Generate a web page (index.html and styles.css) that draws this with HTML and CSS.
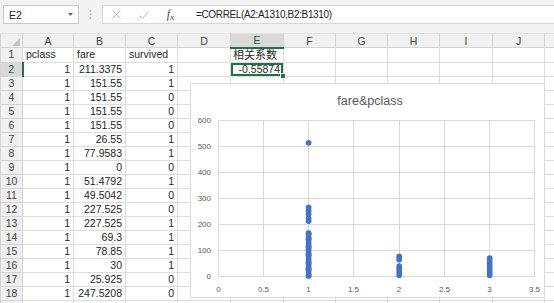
FILE: index.html
```html
<!DOCTYPE html>
<html lang="zh">
<head>
    <meta charset="UTF-8">
    <title>Book1 - Excel</title>
    <link rel="stylesheet" href="styles.css">
</head>
<body>

<div class="topbar">
    <div class="namebox">
        <span>E2</span>
        <svg width="5" height="3" viewBox="0 0 5 3"><path d="M0 0H5L2.5 3Z" fill="#666"/></svg>
    </div>
    <div class="grip">
        <svg width="3" height="9" viewBox="0 0 3 9"><circle cx="1.5" cy="1" r="0.9" fill="#b5b5b5"/><circle cx="1.5" cy="4.5" r="0.9" fill="#b5b5b5"/><circle cx="1.5" cy="8" r="0.9" fill="#b5b5b5"/></svg>
    </div>
    <div class="bar">
        <div class="tools">
            <span class="slot"><svg width="9" height="9" viewBox="0 0 9 9"><path d="M0.5 0.5L8.5 8.5M8.5 0.5L0.5 8.5" stroke="#b9b9b9" stroke-width="1"/></svg></span>
            <span class="slot"><svg width="10" height="8" viewBox="0 0 10 8"><path d="M0.5 4.5L3.5 7.5L9.5 0.5" fill="none" stroke="#b9b9b9" stroke-width="1"/></svg></span>
            <span class="slot fx"><i>f</i><i class="sub">x</i></span>
        </div>
        <div class="formula">=CORREL(A2:A1310,B2:B1310)</div>
    </div>
</div>

<div class="sheet">
    <table class="grid">
        <colgroup>
            <col class="c-rh"><col class="c-a"><col class="c-b"><col class="c-c"><col class="c-d"><col class="c-e"><col class="c-f"><col class="c-g"><col class="c-h"><col class="c-i"><col class="c-j"><col class="c-k">
        </colgroup>
        <tr class="head">
            <th class="corner"><svg width="8" height="8" viewBox="0 0 8 8"><path d="M8 0V8H0Z" fill="#c6c6c6"/></svg></th>
            <th>A</th><th>B</th><th>C</th><th>D</th><th class="colsel">E</th><th>F</th><th>G</th><th>H</th><th>I</th><th>J</th><th></th>
        </tr>
        <tr><td class="rh">1</td><td>pclass</td><td>fare</td><td>survived</td><td></td><td class="cjk">相关系数</td><td></td><td></td><td></td><td></td><td></td><td></td></tr>
        <tr><td class="rh rowsel">2</td><td class="num">1</td><td class="num">211.3375</td><td class="num">1</td><td></td><td class="num sel">-0.55874</td><td></td><td></td><td></td><td></td><td></td><td></td></tr>
        <tr><td class="rh">3</td><td class="num">1</td><td class="num">151.55</td><td class="num">1</td><td></td><td></td><td></td><td></td><td></td><td></td><td></td><td></td></tr>
        <tr><td class="rh">4</td><td class="num">1</td><td class="num">151.55</td><td class="num">0</td><td></td><td></td><td></td><td></td><td></td><td></td><td></td><td></td></tr>
        <tr><td class="rh">5</td><td class="num">1</td><td class="num">151.55</td><td class="num">0</td><td></td><td></td><td></td><td></td><td></td><td></td><td></td><td></td></tr>
        <tr><td class="rh">6</td><td class="num">1</td><td class="num">151.55</td><td class="num">0</td><td></td><td></td><td></td><td></td><td></td><td></td><td></td><td></td></tr>
        <tr><td class="rh">7</td><td class="num">1</td><td class="num">26.55</td><td class="num">1</td><td></td><td></td><td></td><td></td><td></td><td></td><td></td><td></td></tr>
        <tr><td class="rh">8</td><td class="num">1</td><td class="num">77.9583</td><td class="num">1</td><td></td><td></td><td></td><td></td><td></td><td></td><td></td><td></td></tr>
        <tr><td class="rh">9</td><td class="num">1</td><td class="num">0</td><td class="num">0</td><td></td><td></td><td></td><td></td><td></td><td></td><td></td><td></td></tr>
        <tr><td class="rh">10</td><td class="num">1</td><td class="num">51.4792</td><td class="num">1</td><td></td><td></td><td></td><td></td><td></td><td></td><td></td><td></td></tr>
        <tr><td class="rh">11</td><td class="num">1</td><td class="num">49.5042</td><td class="num">0</td><td></td><td></td><td></td><td></td><td></td><td></td><td></td><td></td></tr>
        <tr><td class="rh">12</td><td class="num">1</td><td class="num">227.525</td><td class="num">0</td><td></td><td></td><td></td><td></td><td></td><td></td><td></td><td></td></tr>
        <tr><td class="rh">13</td><td class="num">1</td><td class="num">227.525</td><td class="num">1</td><td></td><td></td><td></td><td></td><td></td><td></td><td></td><td></td></tr>
        <tr><td class="rh">14</td><td class="num">1</td><td class="num">69.3</td><td class="num">1</td><td></td><td></td><td></td><td></td><td></td><td></td><td></td><td></td></tr>
        <tr><td class="rh">15</td><td class="num">1</td><td class="num">78.85</td><td class="num">1</td><td></td><td></td><td></td><td></td><td></td><td></td><td></td><td></td></tr>
        <tr><td class="rh">16</td><td class="num">1</td><td class="num">30</td><td class="num">1</td><td></td><td></td><td></td><td></td><td></td><td></td><td></td><td></td></tr>
        <tr><td class="rh">17</td><td class="num">1</td><td class="num">25.925</td><td class="num">0</td><td></td><td></td><td></td><td></td><td></td><td></td><td></td><td></td></tr>
        <tr><td class="rh">18</td><td class="num">1</td><td class="num">247.5208</td><td class="num">0</td><td></td><td></td><td></td><td></td><td></td><td></td><td></td><td></td></tr>
        <tr><td class="rh">19</td><td class="num">1</td><td class="num">247.5208</td><td class="num">1</td><td></td><td></td><td></td><td></td><td></td><td></td><td></td><td></td></tr>
    </table>

    <!-- floating chart object -->
    <div class="chart">
        <svg width="355" height="215" viewBox="0 0 355 215">
            <text class="title" x="180" y="21.5" text-anchor="middle">fare&amp;pclass</text>
            <g stroke="#d9d9d9" stroke-width="1">
                <path d="M28 37.5H345M28 63.5H345M28 89.5H345M28 115.5H345M28 141.5H345M28 167.5H345M28 193.5H345"/>
                <path d="M28.5 37V193M73.5 37V193M118.5 37V193M163.5 37V193M209.5 37V193M254.5 37V193M299.5 37V193M344.5 37V193"/>
            </g>
            <g class="lbl" text-anchor="end">
                <text x="21" y="40">600</text>
                <text x="21" y="66">500</text>
                <text x="21" y="92">400</text>
                <text x="21" y="118">300</text>
                <text x="21" y="144">200</text>
                <text x="21" y="170">100</text>
                <text x="21" y="196">0</text>
            </g>
            <g class="lbl" text-anchor="middle">
                <text x="28.5" y="209">0</text>
                <text x="73.5" y="209">0.5</text>
                <text x="118.5" y="209">1</text>
                <text x="163.5" y="209">1.5</text>
                <text x="209" y="209">2</text>
                <text x="254.5" y="209">2.5</text>
                <text x="299.5" y="209">3</text>
                <text x="344.5" y="209">3.5</text>
            </g>
            <g fill="#4472c4">
                <path d="M118.6 150V193" stroke="#4472c4" stroke-width="5.6" stroke-linecap="round"/>
                <circle cx="118.6" cy="59.8" r="2.9"/>
                <circle cx="118.6" cy="124.5" r="2.9"/>
                <circle cx="118.6" cy="127.8" r="2.9"/>
                <circle cx="118.6" cy="131" r="2.9"/>
                <circle cx="118.6" cy="135.3" r="2.9"/>
                <circle cx="118.6" cy="138" r="2.9"/>
                <circle cx="118.6" cy="150.5" r="2.9"/>
                <circle cx="118.6" cy="156" r="2.9"/>
                <circle cx="118.6" cy="164" r="2.9"/>
                <circle cx="118.6" cy="172" r="2.9"/>
                <circle cx="118.6" cy="180" r="2.9"/>
                <circle cx="118.6" cy="186" r="2.9"/>
                <circle cx="118.6" cy="192.6" r="2.9"/>
                <circle cx="209.2" cy="173.5" r="2.9"/>
                <circle cx="209.2" cy="176.5" r="2.9"/>
                <path d="M209.2 183V192.5" stroke="#4472c4" stroke-width="5.6" stroke-linecap="round"/>
                <path d="M299.7 175V192.5" stroke="#4472c4" stroke-width="5.6" stroke-linecap="round"/>
            </g>
        </svg>
    </div>
</div>

</body>
</html>
```

FILE: styles.css
```css
body {
    margin: 0;
    width: 554px;
    height: 303px;
    overflow: hidden;
    font-family: "Liberation Sans", Arial, "Noto Sans CJK SC", sans-serif;
    background-color: #ffffff;
    color: #262626;
}
.topbar {
    height: 33px;
    box-sizing: border-box;
    padding-top: 5px;
    background-color: #f3f3f3;
    display: flex;
    align-items: flex-start;
}
.namebox {
    margin-left: 3px;
    width: 76px;
    height: 19px;
    box-sizing: border-box;
    border: 1px solid #c9c9c9;
    background-color: #fff;
    display: flex;
    align-items: center;
    justify-content: space-between;
    padding: 0 5px 0 5px;
    font-size: 10.5px;
    color: #222;
}
.grip {
    width: 23px;
    height: 19px;
    display: flex;
    align-items: center;
    justify-content: center;
}
.bar {
    flex: 1;
    height: 19px;
    box-sizing: border-box;
    border: 1px solid #d6d6d6;
    border-right: none;
    background-color: #fff;
    display: flex;
    align-items: center;
}
.tools {
    display: flex;
    align-items: center;
}
.slot {
    width: 27px;
    height: 17px;
    display: flex;
    align-items: center;
    justify-content: center;
}
.fx {
    font-family: "Liberation Serif", "Times New Roman", serif;
    color: #4a4a4a;
    font-size: 12px;
}
.fx .sub {
    font-size: 9px;
    margin-top: 4px;
}
.formula {
    padding-left: 12px;
    font-size: 10px;
    letter-spacing: -0.35px;
    color: #222;
    white-space: nowrap;
}
.sheet {
    position: relative;
}
.grid {
    border-collapse: collapse;
    table-layout: fixed;
    width: 554px;
}
.c-rh { width: 22px; }
.c-a { width: 51px; }
.c-b, .c-c, .c-f, .c-g, .c-h, .c-j { width: 52px; }
.c-d, .c-e, .c-i { width: 53px; }
.c-k { width: 10px; }
.grid th {
    height: 12px;
    padding: 0;
    background-color: #f0f0f0;
    border: 1px solid #d4d4d4;
    border-top-color: #e2e2e2;
    font-weight: normal;
    font-size: 10.5px;
    line-height: 12px;
    color: #444;
    text-align: center;
}
.grid th.corner {
    text-align: right;
    vertical-align: bottom;
    padding: 0 2px 1px 0;
    line-height: 0;
}
.grid th.colsel {
    background-color: #d9d9d9;
    border-bottom: 2px solid #217346;
    color: #1f5e3a;
}
.grid td {
    height: 13px;
    padding: 0 3px;
    border: 1px solid #dcdcdc;
    font-size: 10.5px;
    line-height: 13px;
    white-space: nowrap;
    overflow: hidden;
}
.grid td.cjk {
    font-size: 11px;
    padding-left: 2px;
}
.grid td.rh {
    padding: 0;
    background-color: #f0f0f0;
    border-color: #d4d4d4;
    text-align: center;
    color: #444;
}
.grid td.rowsel {
    background-color: #d9d9d9;
    border-right: 2px solid #217346;
    color: #1f5e3a;
}
.grid td.num {
    text-align: right;
}
.grid td.sel {
    position: relative;
    overflow: visible;
    box-shadow: inset 0 0 0 2px #217346;
}
.grid td.sel::after {
    content: "";
    position: absolute;
    right: -3px;
    bottom: -3px;
    width: 4px;
    height: 4px;
    background-color: #217346;
    border: 1px solid #fff;
}
.chart {
    position: absolute;
    left: 190px;
    top: 50px;
    width: 355px;
    height: 215px;
    box-sizing: border-box;
    border: 1px solid #d9d9d9;
    background-color: #fff;
}
.chart svg {
    display: block;
    margin: -1px 0 0 -1px;
}
.chart .title {
    font-family: "Liberation Sans", Arial, sans-serif;
    font-size: 12.5px;
    fill: #595959;
}
.chart .lbl {
    font-family: "Liberation Sans", Arial, sans-serif;
    font-size: 8px;
    fill: #595959;
}
```
